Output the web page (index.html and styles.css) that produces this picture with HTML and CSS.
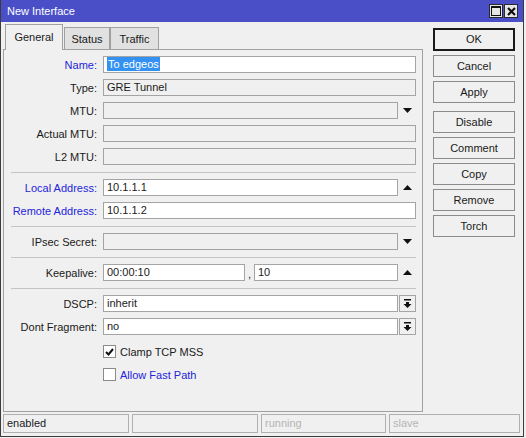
FILE: index.html
```html
<!DOCTYPE html>
<html lang="en">
<head>
    <meta charset="UTF-8">
    <title>New Interface</title>
    <link rel="stylesheet" href="styles.css">
</head>
<body>
    <div class="window">
        <div class="titlebar">
            <span class="title">New Interface</span>
            <div class="tb-buttons">
                <span class="tb-btn">
                    <svg width="10" height="10" viewBox="0 0 10 10"><rect x="0.5" y="0.5" width="9" height="9" fill="none" stroke="#111"/><rect x="0" y="0" width="10" height="2" fill="#111"/></svg>
                </span>
                <span class="tb-btn">
                    <svg width="9" height="9" viewBox="0 0 9 9"><path d="M1 1 L8 8 M8 1 L1 8" stroke="#111" stroke-width="2.2"/></svg>
                </span>
            </div>
        </div>

        <div class="main">
            <div class="left">
                <div class="tabs">
                    <div class="tab active">General</div>
                    <div class="tab tab-status">Status</div>
                    <div class="tab tab-traffic">Traffic</div>
                </div>
                <div class="panel">
                    <div class="section">
                        <div class="row">
                            <label class="lbl blue">Name:</label>
                            <div class="input white"><span class="sel">To edgeos</span></div>
                        </div>
                        <div class="row">
                            <label class="lbl">Type:</label>
                            <div class="input">GRE Tunnel</div>
                        </div>
                        <div class="row">
                            <label class="lbl">MTU:</label>
                            <div class="combo">
                                <div class="input"></div>
                                <span class="arrow"><svg width="9" height="5" viewBox="0 0 9 5"><polygon points="0,0 9,0 4.5,5" fill="#111"/></svg></span>
                            </div>
                        </div>
                        <div class="row">
                            <label class="lbl">Actual MTU:</label>
                            <div class="input"></div>
                        </div>
                        <div class="row">
                            <label class="lbl">L2 MTU:</label>
                            <div class="input"></div>
                        </div>
                    </div>

                    <div class="section">
                        <div class="row">
                            <label class="lbl blue">Local Address:</label>
                            <div class="combo">
                                <div class="input white">10.1.1.1</div>
                                <span class="arrow"><svg width="9" height="5" viewBox="0 0 9 5"><polygon points="0,5 9,5 4.5,0" fill="#111"/></svg></span>
                            </div>
                        </div>
                        <div class="row">
                            <label class="lbl blue">Remote Address:</label>
                            <div class="input white">10.1.1.2</div>
                        </div>
                    </div>

                    <div class="section">
                        <div class="row">
                            <label class="lbl">IPsec Secret:</label>
                            <div class="combo">
                                <div class="input"></div>
                                <span class="arrow"><svg width="9" height="5" viewBox="0 0 9 5"><polygon points="0,0 9,0 4.5,5" fill="#111"/></svg></span>
                            </div>
                        </div>
                    </div>

                    <div class="section">
                        <div class="row">
                            <label class="lbl">Keepalive:</label>
                            <div class="combo">
                                <div class="input white keep-first">00:00:10</div>
                                <span class="comma">,</span>
                                <div class="input white">10</div>
                                <span class="arrow"><svg width="9" height="5" viewBox="0 0 9 5"><polygon points="0,5 9,5 4.5,0" fill="#111"/></svg></span>
                            </div>
                        </div>
                    </div>

                    <div class="section last">
                        <div class="row">
                            <label class="lbl">DSCP:</label>
                            <div class="combo">
                                <div class="input white">inherit</div>
                                <span class="drop-btn"><svg width="9" height="9" viewBox="0 0 9 9"><rect x="1" y="0" width="7" height="1.5" fill="#111"/><rect x="3" y="3" width="3" height="2.5" fill="#111"/><polygon points="0.5,5 8.5,5 4.5,9" fill="#111"/></svg></span>
                            </div>
                        </div>
                        <div class="row">
                            <label class="lbl">Dont Fragment:</label>
                            <div class="combo">
                                <div class="input white">no</div>
                                <span class="drop-btn"><svg width="9" height="9" viewBox="0 0 9 9"><rect x="1" y="0" width="7" height="1.5" fill="#111"/><rect x="3" y="3" width="3" height="2.5" fill="#111"/><polygon points="0.5,5 8.5,5 4.5,9" fill="#111"/></svg></span>
                            </div>
                        </div>
                        <div class="row check-row first-check">
                            <span></span>
                            <div class="check">
                                <span class="box"><svg width="9" height="8" viewBox="0 0 9 8"><polyline points="1,4 3.5,6.5 8,1" fill="none" stroke="#111" stroke-width="2"/></svg></span>
                                <span>Clamp TCP MSS</span>
                            </div>
                        </div>
                        <div class="row check-row">
                            <span></span>
                            <div class="check">
                                <span class="box"></span>
                                <span class="blue">Allow Fast Path</span>
                            </div>
                        </div>
                    </div>
                </div>
            </div>

            <div class="buttons">
                <div class="btn default">OK</div>
                <div class="btn">Cancel</div>
                <div class="btn">Apply</div>
                <div class="btn spaced">Disable</div>
                <div class="btn">Comment</div>
                <div class="btn">Copy</div>
                <div class="btn">Remove</div>
                <div class="btn">Torch</div>
            </div>
        </div>

        <div class="statusbar">
            <div class="status-box s1">enabled</div>
            <div class="status-box s2"></div>
            <div class="status-box s3 dim">running</div>
            <div class="status-box s4 dim">slave</div>
        </div>
    </div>
</body>
</html>
```

FILE: styles.css
```css
/* Base */
body {
    margin: 0;
    background: #f0f0f0;
    font-family: "Liberation Sans", Arial, sans-serif;
    font-size: 11px;
    color: #1a1a1a;
}

.window {
    width: 524px;
    height: 437px;
    box-sizing: border-box;
    border: 1px solid #3c3c3c;
    border-top: none;
    background: #f0f0f0;
    display: flex;
    flex-direction: column;
}

/* Title bar */
.titlebar {
    height: 22px;
    background: #4a4fc8;
    color: #fff;
    display: flex;
    align-items: center;
    justify-content: space-between;
    padding: 0 5px 0 6px;
    flex-shrink: 0;
}

.tb-buttons {
    display: flex;
    gap: 1px;
}

.tb-btn {
    width: 14px;
    height: 14px;
    box-sizing: border-box;
    border: 1px solid #2a2a2a;
    background: #e6e6e6;
    display: flex;
    align-items: center;
    justify-content: center;
}

/* Main area */
.main {
    display: flex;
    padding: 2px 0 0 2px;
}

.left {
    width: 420px;
}

.tabs {
    display: flex;
    align-items: flex-end;
    height: 25px;
    padding-left: 2px;
}

.tab {
    height: 22px;
    box-sizing: border-box;
    border: 1px solid #a0a0a0;
    border-bottom: none;
    background: #e1e1e1;
    text-align: center;
    line-height: 22px;
}

.tab.active {
    width: 58px;
    height: 26px;
    line-height: 24px;
    margin-bottom: -1px;
    background: #f0f0f0;
    position: relative;
    z-index: 1;
}

.tab-status { width: 46px; margin-left: 1px; }
.tab-traffic { width: 49px; }

.panel {
    height: 363px;
    box-sizing: border-box;
    border: 1px solid #a0a0a0;
    background: #f0f0f0;
}

.section {
    margin: 0 6px 0 7px;
    padding: 6px 0 7px;
    border-bottom: 1px solid #c4c4c4;
    display: flex;
    flex-direction: column;
    gap: 6px;
}

.section.last {
    border-bottom: none;
}

.row {
    display: grid;
    grid-template-columns: 86px 1fr;
    column-gap: 6px;
    align-items: center;
    height: 17px;
}

.lbl {
    text-align: right;
    white-space: nowrap;
}

.blue {
    color: #2424dc;
}

.input {
    height: 17px;
    box-sizing: border-box;
    border: 1px solid #a4a4a4;
    background: #f0f0f0;
    padding: 0 3px;
    line-height: 15px;
    white-space: nowrap;
    overflow: hidden;
}

.input.white {
    background: #fff;
}

.sel {
    background: #3391f2;
    color: #fff;
    padding: 1px 1px;
}

.combo {
    display: flex;
    align-items: center;
}

.combo .input {
    flex: 1;
}

.combo .input.keep-first {
    flex: 0 0 142px;
}

.comma {
    width: 9px;
    text-align: center;
    padding-top: 3px;
}

.arrow {
    width: 18px;
    display: flex;
    justify-content: center;
}

.drop-btn {
    width: 17px;
    height: 17px;
    box-sizing: border-box;
    margin-left: 1px;
    border: 1px solid #a4a4a4;
    background: #f0f0f0;
    display: flex;
    align-items: center;
    justify-content: center;
}

/* Checkboxes */
.first-check {
    margin-top: 2px;
}

.check {
    display: flex;
    align-items: center;
    gap: 4px;
}

.check .box {
    width: 13px;
    height: 13px;
    box-sizing: border-box;
    border: 1px solid #8a8a8a;
    background: #fff;
    display: flex;
    align-items: center;
    justify-content: center;
}

/* Right side buttons */
.buttons {
    width: 82px;
    margin: 4px 0 0 10px;
    display: flex;
    flex-direction: column;
    gap: 4px;
}

.btn {
    height: 22px;
    box-sizing: border-box;
    border: 1px solid #8c8c8c;
    background: #f0f0f0;
    text-align: center;
    line-height: 20px;
}

.btn.default {
    height: 23px;
    border: 2px solid #1a1a1a;
    line-height: 19px;
}

.btn.spaced {
    margin-top: 4px;
}

/* Status bar */
.statusbar {
    display: flex;
    gap: 3px;
    margin: 2px 3px 0 2px;
}

.status-box {
    height: 19px;
    box-sizing: border-box;
    border: 1px solid #b0b0b0;
    padding-left: 3px;
    line-height: 17px;
}

.s1 { width: 126px; }
.s2 { width: 126px; }
.s3 { width: 125px; }
.s4 { flex: 1; }

.dim {
    color: #b4b4b4;
}
```
